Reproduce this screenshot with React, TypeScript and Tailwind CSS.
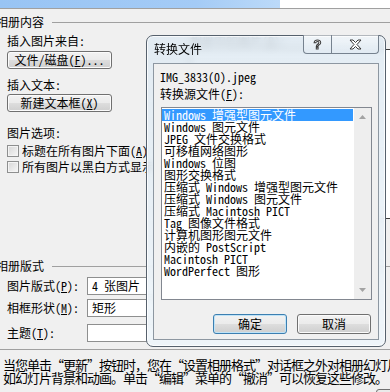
import React from 'react';

const listItems = [
  'Windows 增强型图元文件',
  'Windows 图元文件',
  'JPEG 文件交换格式',
  '可移植网络图形',
  'Windows 位图',
  '图形交换格式',
  '压缩式 Windows 增强型图元文件',
  '压缩式 Windows 图元文件',
  '压缩式 Macintosh PICT',
  'Tag 图像文件格式',
  '计算机图形图元文件',
  '内嵌的 PostScript',
  'Macintosh PICT',
  'WordPerfect 图形',
];

// mnemonic letter, e.g. (F)
const Key = ({ k }: { k: string }) => (
  <>
    (<u className="underline-offset-[1px]">{k}</u>)
  </>
);

interface ButtonProps {
  children: React.ReactNode;
  className?: string;
  focused?: boolean;
}

const WinButton: React.FC<ButtonProps> = ({ children, className = '', focused = false }) => (
  <div
    className={`flex items-center justify-center rounded-[3px] border ${
      focused
        ? 'border-[#3c7fb1] shadow-[inset_0_0_0_1px_#bfe3f7]'
        : 'border-[#707070] shadow-[inset_0_0_0_1px_#fbfbfb]'
    } bg-[linear-gradient(180deg,#f2f2f2_0%,#ebebeb_48%,#dddddd_52%,#cfcfcf_100%)] ${className}`}
  >
    {children}
  </div>
);

const GroupHeader: React.FC<{ title: string; className?: string }> = ({ title, className = '' }) => (
  <div className={`ml-[-11px] flex h-[12px] items-center ${className}`}>
    <span className="whitespace-nowrap">{title}</span>
    <div className="ml-[8px] h-px flex-1 bg-[#a0a0a0]" />
  </div>
);

const Checkbox: React.FC<{ label: React.ReactNode; className?: string }> = ({ label, className = '' }) => (
  <div className={`flex h-[12px] items-center whitespace-nowrap ${className}`}>
    <div className="h-[12px] w-[12px] shrink-0 border border-[#8e8f8f] bg-[linear-gradient(135deg,#d6d6d6,#f7f7f7)] shadow-[inset_0_0_0_1px_#f4f4f4]" />
    <span className="ml-[3px]">{label}</span>
  </div>
);

const FieldRow: React.FC<{ label: React.ReactNode; value?: string; className?: string }> = ({
  label,
  value,
  className = '',
}) => (
  <div className={`flex h-[18px] items-center ${className}`}>
    <span className="w-[80px] shrink-0 whitespace-nowrap">{label}</span>
    <div className="flex h-[18px] w-[120px] items-center border border-[#8e8f8f] bg-white pl-[4px] whitespace-pre">
      {value}
    </div>
  </div>
);

const Arrow: React.FC<{ down?: boolean }> = ({ down }) => (
  <svg width="7" height="4" viewBox="0 0 7 4">
    <polygon points={down ? '0,0 7,0 3.5,4' : '0,4 7,4 3.5,0'} fill="#a3a3a3" />
  </svg>
);

const ConvertDialog: React.FC = () => (
  <div className="absolute left-[146px] top-[35px] flex h-[312px] w-[240px] flex-col rounded-[7px] border border-[#56616d] bg-[linear-gradient(180deg,rgba(222,233,242,0.82),rgba(238,245,250,0.9))] shadow-[inset_0_0_0_1px_rgba(255,255,255,0.75)] backdrop-blur-[3px]">
    {/* title bar */}
    <div className="flex h-[27px] shrink-0">
      <span className="ml-[7px] mt-[7px] whitespace-nowrap">转换文件</span>
      <div className="ml-auto mr-[6px] mt-[-1px] flex h-[19px]">
        <div className="flex w-[29px] items-center justify-center rounded-bl-[4px] border border-t-0 border-[#76828f] bg-[linear-gradient(180deg,rgba(255,255,255,0.55),rgba(225,235,244,0.6))]">
          <span className="font-['Liberation_Sans',sans-serif] text-[13px] font-bold leading-[13px] text-white [-webkit-text-stroke:1px_#3a3a3a]">
            ?
          </span>
        </div>
        <div className="flex w-[47px] items-center justify-center rounded-br-[4px] border border-l-0 border-t-0 border-[#76828f] bg-[linear-gradient(180deg,rgba(255,255,255,0.55),rgba(225,235,244,0.6))]">
          <svg width="13" height="11" viewBox="-1 -1 13 11">
            <polygon
              points="0,0 3,0 5.5,2.5 8,0 11,0 7,4.5 11,9 8,9 5.5,6.5 3,9 0,9 4,4.5"
              fill="#fff"
              stroke="#3a3a3a"
              strokeWidth="1"
              strokeLinejoin="round"
            />
          </svg>
        </div>
      </div>
    </div>

    {/* client area */}
    <div className="mx-[6px] flex h-[277px] flex-col border border-[#8d97a1] bg-[#f0f0f0] pl-[6px]">
      <div className="mt-[7px] h-[12px]">IMG_3833(0).jpeg</div>
      <div className="mt-[5px] h-[12px]">
        转换源文件<Key k="F" />:
      </div>
      <div className="ml-[1px] mt-[7px] flex h-[193px] w-[211px] border border-[#828790] bg-white">
        <div className="flex-1 pr-[1px] pt-[1px]">
          {listItems.map((item, i) => (
            <div
              key={item + i}
              className={`h-[12px] whitespace-pre pl-[2px] ${i === 0 ? 'bg-[#3399ff] text-white' : ''}`}
            >
              {item}
            </div>
          ))}
        </div>
        <div className="flex w-[17px] flex-col items-center justify-between bg-[#eeeeee] py-[7px]">
          <Arrow />
          <Arrow down />
        </div>
      </div>
      <div className="mt-[14px] flex justify-end gap-[10px] pr-[7px]">
        <WinButton focused className="h-[20px] w-[74px]">
          确定
        </WinButton>
        <WinButton className="h-[20px] w-[74px]">取消</WinButton>
      </div>
    </div>
  </div>
);

export default function App() {
  return (
    <div className="relative h-[392px] w-[390px] overflow-hidden bg-[#f0f0f0] text-[12px] leading-[12px] text-black [font-family:'Noto_Sans_Mono_CJK_SC','Liberation_Mono','Noto_Sans_CJK_SC',monospace]">
      <div className="flex h-[8px]">
        <div className="w-[280px] bg-[linear-gradient(90deg,#98c4f4,#a4cbf6_70%,#bcdaf9)]" />
        <div className="flex-1 bg-white" />
      </div>
      <div className="h-px bg-[#a0a0a0]" />

      <div className="pl-[7px]">
        <GroupHeader title="相册内容" className="mt-[7px]" />

        <div className="flex h-[232px]">
          <div className="w-[183px] shrink-0">
            <div className="mt-[7px] h-[12px] whitespace-nowrap">插入图片来自:</div>
            <WinButton className="mt-[4px] h-[18px] w-[105px]">
              文件/磁盘<Key k="F" />...
            </WinButton>
            <div className="mt-[10px] h-[12px]">插入文本:</div>
            <WinButton className="mt-[3px] h-[18px] w-[105px]">
              新建文本框<Key k="X" />
            </WinButton>
            <div className="mt-[15px] h-[12px]">图片选项:</div>
            <Checkbox
              className="mt-[6px]"
              label={
                <>
                  标题在所有图片下面<Key k="A" />
                </>
              }
            />
            <Checkbox className="mt-[4px]" label="所有图片以黑白方式显示" />
          </div>
          <div>
            <div className="mt-[7px] h-[12px] whitespace-nowrap text-[#555]">
              相册中的图片<Key k="R" />:
            </div>
            <div className="mt-[2px] h-[170px] w-[260px] border border-[#3c3c3c] bg-white" />
          </div>
        </div>

        <GroupHeader title="相册版式" />
        <FieldRow
          className="mt-[5px]"
          label={
            <>
              图片版式<Key k="P" />:
            </>
          }
          value="4 张图片"
        />
        <FieldRow
          className="mt-[4px]"
          label={
            <>
              相框形状<Key k="M" />:
            </>
          }
          value="矩形"
        />
        <FieldRow
          className="mt-[7px]"
          label={
            <>
              主题<Key k="T" />:
            </>
          }
        />
      </div>

      <div className="mt-[7px] h-px bg-[#a0a0a0]" />
      <div className="mt-[8px] whitespace-nowrap pl-[3px] text-[13px] leading-[13px] tracking-[-1px] [font-family:'Noto_Sans_CJK_SC',sans-serif]">
        <div>当您单击“更新”按钮时，您在“设置相册格式”对话框之外对相册幻灯片所做的更改</div>
        <div>如幻灯片背景和动画。单击“编辑”菜单的“撤消”可以恢复这些修改。</div>
      </div>
      <div className="flex justify-end">
        <div className="mr-[-10px] mt-[5px] h-[12px] w-[24px] rounded-[3px] border border-[#707070] bg-[#eaeaea]" />
      </div>

      <ConvertDialog />
    </div>
  );
}
